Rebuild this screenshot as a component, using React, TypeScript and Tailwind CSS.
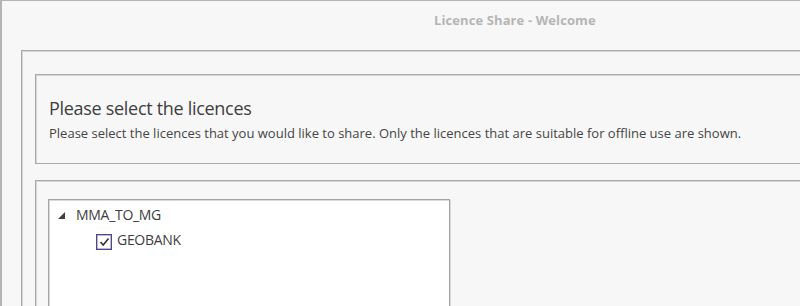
import React from "react";

export default function App() {
  return (
    <div
      className="w-[800px] h-[306px] overflow-hidden bg-[#f7f7f7] border-t border-l-2 border-[#b4b4b4] flex flex-col"
      style={{ fontFamily: '"Open Sans", "Noto Sans", sans-serif' }}
    >
      <div className="h-[49px] shrink-0 pl-[432px] pt-[6px]">
        <span className="text-[13px] font-bold leading-[18px] text-[#b5b5b5] tracking-[0.1px]">
          Licence Share - Welcome
        </span>
      </div>
      <div className="ml-[19px] w-[900px] h-[400px] shrink-0 border-t border-l border-[#a9a9a9] shadow-[inset_1px_1px_0_#d6d6d6] pl-[13px] pt-[23px] flex flex-col gap-[16px]">
        <div className="h-[90px] shrink-0 border border-[#a9a9a9] shadow-[inset_1px_1px_0_#d6d6d6] pl-[13px] pt-[21px]">
          <div className="text-[18px] leading-[24px] text-[#3e3e3e] tracking-[-0.3px]">
            Please select the licences
          </div>
          <div className="mt-[5px] text-[13px] leading-[17px] text-[#454545]">
            Please select the licences that you would like to share. Only the licences that are suitable for offline use are shown.
          </div>
        </div>
        <div className="h-[300px] shrink-0 border border-[#a9a9a9] shadow-[inset_1px_1px_0_#d6d6d6] pl-[12px] pt-[18px]">
          <div className="w-[402px] h-[200px] bg-white border border-[#a4a4a4] shadow-[inset_1px_1px_0_#d9d9d9,1px_1px_0_#d9d9d9] pt-[5px]">
            <div className="flex items-center h-[20px] pl-[9px]">
              <svg width="7" height="7" viewBox="0 0 7 7" className="mr-[11px] mt-[1px]">
                <polygon points="7,0 7,7 0,7" fill="#404040" />
              </svg>
              <span className="text-[14px] leading-[20px] text-[#3e3e3e] tracking-[-0.3px]">
                MMA_TO_MG
              </span>
            </div>
            <div className="flex items-center h-[22px] pl-[47px] mt-[4px]">
              <div className="w-[16px] h-[16px] border border-[#4f4784] shadow-[inset_0_0_0_0.5px_#7a72a8] bg-white flex items-center justify-center mr-[5px] mt-[3px]">
                <svg width="11" height="10" viewBox="0 0 11 10">
                  <path d="M1.5 5 L4.2 8 L9.5 1.5" stroke="#333" strokeWidth="1.6" fill="none" />
                </svg>
              </div>
              <span className="text-[14px] leading-[20px] text-[#3e3e3e] tracking-[-0.3px]">
                GEOBANK
              </span>
            </div>
          </div>
        </div>
      </div>
    </div>
  );
}
